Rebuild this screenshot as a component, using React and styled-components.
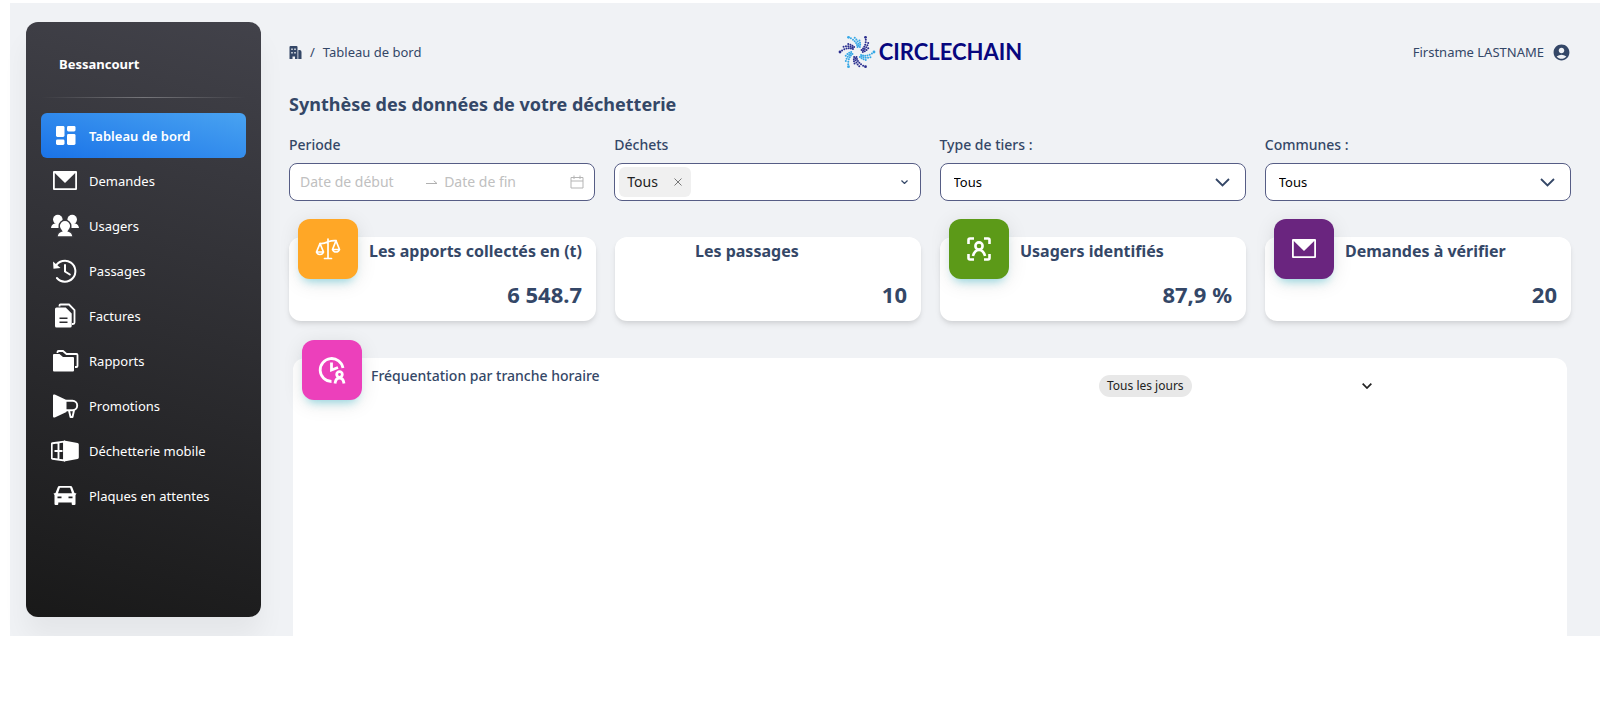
import React from 'react';
import styled, { createGlobalStyle, ThemeProvider } from 'styled-components';
import { MdAccountCircle } from 'react-icons/md';

const theme = {
  color: {
    page: '#f0f2f5',
    text: '#344767',
    logo: '#07077e',
    border: '#565d85',
  },
  font: {
    family: '"Noto Sans", "Open Sans", sans-serif',
    size: {
      small: '12px',
      default: '13px',
      label: '14px',
      card: '16px',
      title: '18px',
      value: '22px',
    },
  },
};

const GlobalStyle = createGlobalStyle`
  * {
    box-sizing: border-box;
  }
  body {
    margin: 0;
    background: #fff;
    color: ${theme.color.text};
    font-family: ${theme.font.family};
    font-size: ${theme.font.size.default};
    line-height: 20px;
  }
  button, input, select {
    font-family: inherit;
    font-size: inherit;
    line-height: inherit;
  }
`;

const Page = styled.div`
  display: flex;
  margin: 3px 0 0 10px;
  background: ${(props) => props.theme.color.page};
`;

/* Sidebar */

const Sidebar = styled.aside`
  flex: 0 0 235px;
  margin: 19px 0 19px 16px;
  padding: 0 15px;
  border-radius: 12px;
  color: #fff;
  background: linear-gradient(195deg, #42424a, #191919);
  box-shadow: 0 20px 27px 0 rgba(0, 0, 0, 0.05);
`;

const Town = styled.h2`
  margin: 0;
  padding: 32px 18px 23px;
  font-size: ${(props) => props.theme.font.size.default};
  font-weight: 700;
`;

const Divider = styled.hr`
  height: 1px;
  margin: 0 0 15px;
  border: 0;
  background: linear-gradient(
    to right,
    rgba(255, 255, 255, 0),
    rgba(255, 255, 255, 0.3),
    rgba(255, 255, 255, 0)
  );
`;

const NavList = styled.ul`
  list-style-type: none;
  margin: 0;
  padding: 0;
`;

const NavLink = styled.a`
  display: flex;
  align-items: center;
  gap: 10px;
  height: 45px;
  padding: 0 10px;
  border-radius: 6px;
  color: #fff;
  font-weight: ${(props) => (props.$active ? 600 : 400)};
  text-decoration: none;
  background: ${(props) =>
    props.$active ? 'linear-gradient(195deg, #49a3f1, #1a73e8)' : 'none'};

  svg {
    flex: none;
    width: 28px;
    height: 28px;
  }
`;

/* Main column */

const Main = styled.main`
  flex: 1;
  min-width: 0;
  padding: 28px 29px 0 28px;
`;

const TopBar = styled.header`
  display: grid;
  grid-template-columns: 1fr auto 1fr;
  align-items: center;
  height: 42px;
`;

const Breadcrumb = styled.nav`
  display: flex;
  align-items: center;
  gap: 8px;

  a {
    display: flex;
    color: inherit;
    text-decoration: none;
  }
`;

const LogoLink = styled.a`
  display: flex;
  align-items: center;
  gap: 3px;
  color: ${(props) => props.theme.color.logo};
  font-family: Lato, sans-serif;
  font-size: 22px;
  font-weight: 700;
  text-decoration: none;
`;

const Account = styled.a`
  display: flex;
  align-items: center;
  justify-self: end;
  gap: 8px;
  color: inherit;
  text-decoration: none;
`;

const Title = styled.h1`
  margin: 18px 0;
  font-size: ${(props) => props.theme.font.size.title};
  line-height: 26px;
  font-weight: 700;
`;

const Columns = styled.div`
  display: grid;
  grid-template-columns: repeat(4, 1fr);
  gap: 19px;
`;

const Field = styled.div`
  display: flex;
  flex-direction: column;
  gap: 8px;
`;

const Label = styled.label`
  font-size: ${(props) => props.theme.font.size.label};
  font-weight: 500;
`;

const Control = styled.div`
  display: flex;
  align-items: center;
  height: 38px;
  padding: ${(props) => props.$padding || '0 10px'};
  border: 1px solid ${(props) => props.theme.color.border};
  border-radius: 8px;
  background: #fff;
  font-size: ${(props) => props.theme.font.size.label};
`;

const DateInput = styled.input`
  flex: 1;
  width: 0;
  padding: 0;
  border: 0;
  outline: 0;
  background: none;
  color: #222;

  &::placeholder {
    color: #c0c0c0;
  }
`;

const Tag = styled.span`
  display: flex;
  align-items: center;
  gap: 15px;
  height: 30px;
  padding: 0 8px;
  border-radius: 6px;
  background: #f0f0f0;
  color: #222;
`;

const TagRemove = styled.button`
  display: flex;
  padding: 0;
  border: 0;
  background: none;
  color: #777;
`;

const TagInput = styled.input`
  flex: 1;
  width: 0;
  border: 0;
  outline: 0;
  background: none;
`;

const SelectWrap = styled.div`
  display: grid;
  align-items: center;

  select,
  svg {
    grid-area: 1 / 1;
  }
  svg {
    justify-self: end;
    margin-right: 16px;
    pointer-events: none;
  }
`;

const Select = styled.select`
  width: 100%;
  height: 38px;
  padding: 0 13px;
  border: 1px solid ${(props) => props.theme.color.border};
  border-radius: 8px;
  background: #fff;
  color: #000;
  appearance: none;
`;

const Cards = styled(Columns)`
  margin-top: 36px;
`;

const Card = styled.section`
  display: flex;
  gap: 11px;
  height: 84px;
  padding: 0 14px 0 9px;
  border-radius: 12px;
  background: #fff;
  box-shadow: 0 4px 6px -1px rgba(0, 0, 0, 0.1), 0 2px 4px -1px rgba(0, 0, 0, 0.06);
`;

const Tile = styled.div`
  display: flex;
  flex: none;
  align-items: center;
  justify-content: center;
  width: 60px;
  height: 60px;
  margin-top: -18px;
  border-radius: 12px;
  color: #fff;
  background: ${(props) => props.$color || 'none'};
  box-shadow: ${(props) =>
    props.$color
      ? '0 4px 20px 0 rgba(0, 0, 0, 0.1), 0 7px 10px -5px rgba(0, 187, 212, 0.4)'
      : 'none'};
`;

const CardBody = styled.div`
  flex: 1;
  min-width: 0;
`;

const CardTitle = styled.h3`
  margin: 0;
  font-size: ${(props) => props.theme.font.size.card};
  line-height: 28px;
  font-weight: 700;
  white-space: nowrap;
`;

const CardValue = styled.p`
  margin: 14px 0 0;
  font-size: ${(props) => props.theme.font.size.value};
  line-height: 30px;
  font-weight: 700;
  text-align: right;
`;

const ChartPanel = styled.section`
  display: flex;
  align-items: flex-start;
  min-height: 278px;
  margin: 37px 4px 0;
  padding: 0 9px;
  border-radius: 12px 12px 0 0;
  background: #fff;
`;

const ChartTitle = styled.h3`
  flex: 1;
  margin: 8px 0 0 9px;
  font-size: ${(props) => props.theme.font.size.label};
  font-weight: 500;
`;

const DayPicker = styled.div`
  display: flex;
  align-items: center;
  width: 273px;
  margin: 17px 186px 0 0;
  color: #222;
`;

const DayTag = styled.span`
  padding: 1px 8px;
  border-radius: 12px;
  background: #e8e8e8;
  font-size: ${(props) => props.theme.font.size.small};
`;

/* Icons */

const DashboardIcon = () => (
  <svg viewBox="0 0 28 28" fill="currentColor">
    <rect x="5" y="4" width="8.5" height="11" rx="1.4" />
    <rect x="5" y="17.5" width="8.5" height="5.5" rx="1.4" />
    <rect x="16" y="4" width="8.5" height="5.5" rx="1.4" />
    <rect x="16" y="12" width="8.5" height="11" rx="1.4" />
  </svg>
);

const MailIcon = ({ size = 28 }) => (
  <svg width={size} height={size} viewBox="0 0 28 28" fill="currentColor">
    <path
      fillRule="evenodd"
      d="M3 4h22a1 1 0 0 1 1 1v17a1 1 0 0 1-1 1H3a1 1 0 0 1-1-1V5a1 1 0 0 1 1-1zm.8 2v15.2h20.4V6L14 16z"
    />
  </svg>
);

const UsersIcon = () => (
  <svg viewBox="0 0 28 28" fill="currentColor">
    <circle cx="6.8" cy="7.6" r="4.8" />
    <circle cx="21.2" cy="7.6" r="4.8" />
    <path d="M0 16c.3-2.8 1.500-4 4-4.500h4.500L7.500 16zM28 16c-.3-2.8-1.500-4-4-4.500h-4.500l1 4.500z" />
    <g stroke="#37373d" strokeWidth="1.4">
      <path d="M10.500 19C9.500 17.800 8.200 16.200 8.200 14a5.800 5.800 0 0 1 11.600 0c0 2.200-1.300 3.800-2.300 5 3 .8 4.300 2.600 4.600 6H5.900c.3-3.400 1.600-5.200 4.600-6z" />
    </g>
  </svg>
);

const HistoryIcon = () => (
  <svg viewBox="0 0 28 28" fill="none" stroke="currentColor" strokeWidth="2">
    <path d="M4.600 9.300a10.500 10.500 0 1 1 1.300 11.700" strokeLinecap="round" />
    <path d="M14 8v6.500l4.800 3" strokeLinecap="round" />
    <path d="M2 4.500l.5 7.200 7-.8z" fill="currentColor" stroke="none" />
  </svg>
);

const FilesIcon = () => (
  <svg viewBox="0 0 28 28" fill="currentColor">
    <path
      fillRule="evenodd"
      d="M5.500 5.500h9.200l6 6v12.500a1.500 1.500 0 0 1-1.500 1.500H5.500A1.500 1.500 0 0 1 4 24V7a1.500 1.500 0 0 1 1.500-1.500zM8.500 15.500v1.500h8v-1.500zm0 4V21h8v-1.500z"
    />
    <path
      d="M8.500 4.500V3.500a1 1 0 0 1 1-1h8.500l5.500 5.500v12.500a1.500 1.500 0 0 1-1.500 1.500h-1"
      fill="none"
      stroke="currentColor"
      strokeWidth="1.8"
    />
  </svg>
);

const FoldersIcon = () => (
  <svg viewBox="0 0 28 28" fill="currentColor">
    <path d="M3 7h5.500l3.500 3h10a1 1 0 0 1 1 1v12.500a1 1 0 0 1-1 1H3a1 1 0 0 1-1-1V8a1 1 0 0 1 1-1z" />
    <path
      d="M6.500 6V5a1 1 0 0 1 1-1h4.500l3.500 3h10a1 1 0 0 1 1 1v11a1 1 0 0 1-1 1H24"
      fill="none"
      stroke="currentColor"
      strokeWidth="1.8"
    />
  </svg>
);

const MegaphoneIcon = () => (
  <svg viewBox="0 0 28 28" fill="currentColor">
    <path d="M3.800 2.600 15.500 8v12L3.800 25.400A1.200 1.200 0 0 1 2 24.300V3.700a1.200 1.200 0 0 1 1.800-1.100z" />
    <path
      d="M15 8.800h6.500a4.700 4.700 0 0 1 0 9.400H15M18 18.500l1.500 6.500h2l1.500-6.500"
      fill="none"
      stroke="currentColor"
      strokeWidth="1.9"
      strokeLinejoin="round"
    />
  </svg>
);

const ContainerIcon = () => (
  <svg viewBox="0 0 28 28" fill="currentColor">
    <path d="M13 3.500 26.500 6a1.500 1.500 0 0 1 1.300 1.500v13a1.500 1.500 0 0 1-1.300 1.500L13 24.500z" />
    <path
      d="M13 4.600 1.500 6.300a1 1 0 0 0-.8 1v13.400a1 1 0 0 0 .8 1L13 23.400zM7.500 6v16M3.500 14h8"
      fill="none"
      stroke="currentColor"
      strokeWidth="1.9"
    />
  </svg>
);

const CarIcon = () => (
  <svg viewBox="0 0 28 28" fill="currentColor">
    <path
      fillRule="evenodd"
      d="M8.500 4h11a2 2 0 0 1 1.900 1.400L23.500 11l2 .5-1 1.500v9a1 1 0 0 1-1 1h-1.800a1 1 0 0 1-1-1v-1.500H7.300V22a1 1 0 0 1-1 1H4.500a1 1 0 0 1-1-1v-9l-1-1.500 2-.5 2.100-5.600A2 2 0 0 1 8.500 4zm.4 1.800L7 11.300h14l-1.900-5.500zM6.500 14.500v1.800h4v-1.800zm11 0v1.800h4v-1.800z"
    />
  </svg>
);

const BuildingIcon = () => (
  <svg width="13" height="13" viewBox="0 0 13 13" fill="currentColor">
    <path
      fillRule="evenodd"
      d="M1.500 0h6a1 1 0 0 1 1 1v12H6v-2.500H3.500V13H.5V1a1 1 0 0 1 1-1zM2.300 2.500v1.400h1.400V2.500zm3 0v1.400h1.400V2.500zm-3 3.500v1.400h1.400V6zm3 0v1.400h1.400V6z"
    />
    <path d="M9.300 4h1.200a2 2 0 0 1 2 2v7H9.300z" />
  </svg>
);

const ScaleIcon = () => (
  <svg width="26" height="24" viewBox="0 0 26 24" fill="none" stroke="currentColor" strokeWidth="1.7" strokeLinecap="round" strokeLinejoin="round">
    <path d="M13 2v19M9.500 21.500h7M5 6.500c3 .3 5.500-.5 8-1.800 2.500-.8 5-1.300 8-1" />
    <path d="M5 6.500 1.500 15a3.700 3.700 0 0 0 7 0zM1.500 15h7M21 3.700l-3.500 8.800a3.700 3.700 0 0 0 7 0zM17.500 12.500h7" />
  </svg>
);

const UserScanIcon = () => (
  <svg width="26" height="26" viewBox="0 0 26 26" fill="none" stroke="currentColor" strokeWidth="2.6">
    <path d="M2.500 8V4a1.500 1.500 0 0 1 1.500-1.500h4M18 2.500h4A1.500 1.500 0 0 1 23.500 4v4M23.500 18v4a1.500 1.500 0 0 1-1.500 1.500h-4M8 23.500H4A1.500 1.500 0 0 1 2.500 22v-4" />
    <circle cx="13" cy="10" r="3.6" />
    <path d="M7 20c1-4 3-6 6-6s5 2 6 6" />
  </svg>
);

const ClockUserIcon = () => (
  <svg width="28" height="28" viewBox="0 0 28 28" fill="none" stroke="currentColor" strokeWidth="2.8">
    <path d="M13.500 25.500A11.500 11.500 0 1 1 25 12" />
    <path d="M13.500 6.500V14l6.500-2.500" />
    <circle cx="21.500" cy="18.500" r="2.800" />
    <path d="M17 27.500c.4-3.500 2-5.500 4.500-5.500s4.100 2 4.500 5.500" />
  </svg>
);

const CalendarIcon = () => (
  <svg width="14" height="14" viewBox="0 0 14 14" fill="none" stroke="#b5b5b5">
    <path d="M1 2.500h12v10.500H1zM1 6h12M4 .5v3.500M10 .5v3.500" />
  </svg>
);

const ArrowIcon = () => (
  <svg width="18" height="12" viewBox="0 0 18 12" fill="none" stroke="#b0b0b0">
    <path d="M0 7.500h11L7.800 4.800" />
  </svg>
);

const CloseIcon = () => (
  <svg width="10" height="10" viewBox="0 0 10 10" fill="none" stroke="currentColor">
    <path d="M1.500 1.500l7 7M8.500 1.500l-7 7" />
  </svg>
);

const ChevronIcon = ({ width, stroke }) => (
  <svg width={width} height={width * 0.6} viewBox="0 0 15 9" fill="none" stroke="currentColor" strokeWidth={stroke}>
    <path d="M1 1l6.500 6.500L14 1" />
  </svg>
);

// six spiral arms of dots, alternating navy and cyan
const LogoMark = () => {
  const dots = [];
  for (let arm = 0; arm < 6; arm += 1) {
    for (let strand = 0; strand < 3; strand += 1) {
      for (let i = 0; i < 7; i += 1) {
        const radius = 17 - strand * 2.6 - i * 2;
        if (radius > 4.5) {
          const angle = ((arm * 60 + i * 6 + strand * 21) * Math.PI) / 180;
          dots.push(
            <circle
              key={`${arm}-${strand}-${i}`}
              cx={19 + radius * Math.cos(angle)}
              cy={18 + radius * Math.sin(angle)}
              r={i === 0 && strand === 0 ? 1.4 : 1}
              fill={arm % 2 ? '#2b2f8f' : '#35a8e6'}
            />
          );
        }
      }
    }
  }
  return (
    <svg width="38" height="36" viewBox="0 0 38 36">
      {dots}
    </svg>
  );
};

const links = [
  { label: 'Tableau de bord', icon: <DashboardIcon />, active: true },
  { label: 'Demandes', icon: <MailIcon /> },
  { label: 'Usagers', icon: <UsersIcon /> },
  { label: 'Passages', icon: <HistoryIcon /> },
  { label: 'Factures', icon: <FilesIcon /> },
  { label: 'Rapports', icon: <FoldersIcon /> },
  { label: 'Promotions', icon: <MegaphoneIcon /> },
  { label: 'Déchetterie mobile', icon: <ContainerIcon /> },
  { label: 'Plaques en attentes', icon: <CarIcon /> },
];

const cards = [
  { title: 'Les apports collectés en (t)', value: '6 548.7', color: '#ffa726', icon: <ScaleIcon /> },
  { title: 'Les passages', value: '10' },
  { title: 'Usagers identifiés', value: '87,9 %', color: '#5c9a18', icon: <UserScanIcon /> },
  { title: 'Demandes à vérifier', value: '20', color: '#6a257f', icon: <MailIcon /> },
];

function SelectField({ id, label }) {
  return (
    <Field>
      <Label htmlFor={id}>{label}</Label>
      <SelectWrap>
        <Select id={id}>
          <option>Tous</option>
        </Select>
        <ChevronIcon width={15} stroke={1.8} />
      </SelectWrap>
    </Field>
  );
}

export default function App() {
  return (
    <ThemeProvider theme={theme}>
      <GlobalStyle />
      <Page>
        <Sidebar>
          <Town>Bessancourt</Town>
          <Divider />
          <NavList>
            {links.map((link) => (
              <li key={link.label}>
                <NavLink href="#" $active={link.active}>
                  {link.icon}
                  {link.label}
                </NavLink>
              </li>
            ))}
          </NavList>
        </Sidebar>
        <Main>
          <TopBar>
            <Breadcrumb>
              <a href="#" aria-label="Accueil">
                <BuildingIcon />
              </a>
              <span>/</span>
              <span>Tableau de bord</span>
            </Breadcrumb>
            <LogoLink href="#">
              <LogoMark />
              CIRCLECHAIN
            </LogoLink>
            <Account href="#">
              Firstname LASTNAME
              <MdAccountCircle size={19} />
            </Account>
          </TopBar>
          <Title>Synthèse des données de votre déchetterie</Title>
          <Columns>
            <Field>
              <Label htmlFor="start">Periode</Label>
              <Control>
                <DateInput id="start" placeholder="Date de début" />
                <ArrowIcon />
                <DateInput aria-label="Date de fin" placeholder="Date de fin" />
                <CalendarIcon />
              </Control>
            </Field>
            <Field>
              <Label htmlFor="waste">Déchets</Label>
              <Control $padding="0 12px 0 4px">
                <Tag>
                  Tous
                  <TagRemove type="button" aria-label="Retirer">
                    <CloseIcon />
                  </TagRemove>
                </Tag>
                <TagInput id="waste" />
                <ChevronIcon width={7} stroke={2.6} />
              </Control>
            </Field>
            <SelectField id="party" label="Type de tiers :" />
            <SelectField id="town" label="Communes :" />
          </Columns>
          <Cards>
            {cards.map((card) => (
              <Card key={card.title}>
                <Tile $color={card.color}>{card.icon}</Tile>
                <CardBody>
                  <CardTitle>{card.title}</CardTitle>
                  <CardValue>{card.value}</CardValue>
                </CardBody>
              </Card>
            ))}
          </Cards>
          <ChartPanel>
            <Tile $color="#ec40bb">
              <ClockUserIcon />
            </Tile>
            <ChartTitle>Fréquentation par tranche horaire</ChartTitle>
            <DayPicker>
              <DayTag>Tous les jours</DayTag>
              <TagInput aria-label="Jours" />
              <ChevronIcon width={10} stroke={2.6} />
            </DayPicker>
          </ChartPanel>
        </Main>
      </Page>
    </ThemeProvider>
  );
}
